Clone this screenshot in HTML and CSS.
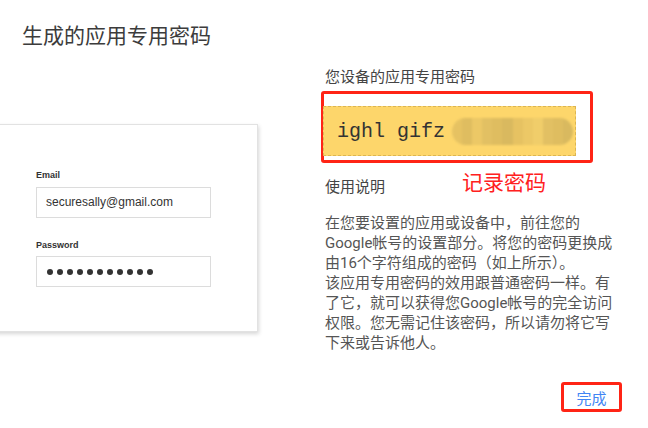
FILE: index.html
```html
<!DOCTYPE html>
<html lang="zh-CN">
<head>
    <meta charset="UTF-8">
    <meta name="viewport" content="width=device-width, initial-scale=1.0">
    <title>生成的应用专用密码</title>
    <link rel="stylesheet" href="styles.css">
</head>
<body>

    <div class="page">
        <h1 class="page-title">生成的应用专用密码</h1>

        <div class="page-body">
            <div class="preview">
                <div class="login-card">
                    <div class="field-label">Email</div>
                    <div class="field-input">securesally@gmail.com</div>
                    <div class="field-label field-label-second">Password</div>
                    <div class="field-input password-dots">
                        <span></span><span></span><span></span><span></span><span></span><span></span>
                        <span></span><span></span><span></span><span></span><span></span>
                    </div>
                </div>
            </div>

            <div class="details">
                <div class="section-label">您设备的应用专用密码</div>
                <div class="mark-box">
                    <div class="app-password">
                        <span class="pw-text">ighl gifz</span>
                        <span class="pw-mosaic">
                            <i class="m1"></i><i class="m2"></i><i class="m3"></i><i class="m4"></i><i class="m2"></i><i class="m5"></i><i class="m1"></i><i class="m3"></i><i class="m6"></i><i class="m4"></i><i class="m2"></i><i class="m5"></i>
                        </span>
                    </div>
                </div>

                <div class="usage-row">
                    <div class="section-label">使用说明</div>
                    <div class="mark-note">记录密码</div>
                </div>

                <div class="usage-text">
                    <p>在您要设置的应用或设备中，前往您的Google帐号的设置部分。将您的密码更换成由16个字符组成的密码（如上所示）。</p>
                    <p>该应用专用密码的效用跟普通密码一样。有了它，就可以获得您Google帐号的完全访问权限。您无需记住该密码，所以请勿将它写下来或告诉他人。</p>
                </div>

                <div class="actions">
                    <div class="mark-box mark-button">
                        <button class="done-btn">完成</button>
                    </div>
                </div>
            </div>
        </div>
    </div>

</body>
</html>
```

FILE: styles.css
```css
body {
    margin: 0;
    background-color: #fff;
    color: #444;
    font-family: Roboto, "Noto Sans CJK SC", sans-serif;
    overflow: hidden;
}
.page {
    width: 648px;
    height: 428px;
}
.page-title {
    margin: 0;
    padding: 22px 0 0 22px;
    font-size: 21px;
    line-height: 28px;
    font-weight: 400;
    color: #3c3c3c;
}
.page-body {
    display: flex;
    align-items: flex-start;
}

/* left: screenshot of the sign-in form */
.preview {
    width: 324px;
    flex-shrink: 0;
}
.login-card {
    width: 175px;
    margin: 74px 0 0 -12px;
    padding: 44px 46px 44px 47px;
    background-color: #fff;
    border: 1px solid #e2e2e2;
    box-shadow: 1px 2px 4px rgba(0, 0, 0, 0.16);
}
.field-label {
    font-family: "Liberation Sans", Arial, sans-serif;
    font-size: 9px;
    line-height: 12px;
    font-weight: bold;
    color: #333;
}
.field-label-second {
    margin-top: 21px;
}
.field-input {
    height: 29px;
    margin-top: 6px;
    padding: 0 0 0 9px;
    border: 1px solid #dcdcdc;
    font-family: "Liberation Sans", Arial, sans-serif;
    font-size: 12px;
    line-height: 29px;
    color: #333;
}
.password-dots {
    display: flex;
    align-items: center;
    gap: 4px;
    margin-top: 5px;
    padding-left: 10px;
}
.password-dots span {
    width: 6px;
    height: 6px;
    border-radius: 50%;
    background-color: #333;
}

/* right: generated password */
.details {
    width: 300px;
}
.section-label {
    font-size: 15px;
    line-height: 20px;
    color: #444;
    padding-left: 1px;
}
.details > .section-label {
    margin-top: 17px;
}
.mark-box {
    border: 3px solid #ff2415;
    border-radius: 3px;
}
.details > .mark-box {
    width: 266px;
    height: 54px;
    margin: 4px 0 0 -3px;
    padding-top: 12px;
}
.app-password {
    display: flex;
    align-items: center;
    box-sizing: border-box;
    width: 253px;
    height: 50px;
    margin-left: -1px;
    padding-left: 13px;
    background-color: #fdd66b;
    border: 1px dashed #dcb552;
}
.pw-text {
    font-family: "Liberation Mono", "Courier New", monospace;
    font-size: 20px;
    color: #333;
    white-space: pre;
}
.pw-mosaic {
    display: flex;
    width: 121px;
    height: 27px;
    margin-left: 7px;
    border-radius: 14px;
    overflow: hidden;
    filter: blur(0.8px);
    background-color: #f3d57a;
}
.pw-mosaic i {
    flex: 1;
}
.pw-mosaic .m1 { background-color: #e6c262; }
.pw-mosaic .m2 { background-color: #dfbd60; }
.pw-mosaic .m3 { background-color: #ecc866; }
.pw-mosaic .m4 { background-color: #e2c063; }
.pw-mosaic .m5 { background-color: #d9b95f; }
.pw-mosaic .m6 { background-color: #f0cd6a; }

.usage-row {
    display: flex;
    align-items: flex-start;
    margin-top: 14px;
}
.mark-note {
    margin: -6px 0 0 77px;
    font-size: 21px;
    line-height: 24px;
    color: #ff2020;
}
.usage-text {
    width: 296px;
    margin-top: 16px;
    padding-left: 1px;
    font-size: 15px;
    line-height: 20px;
    color: #555;
}
.usage-text p {
    margin: 0;
}
.actions {
    display: flex;
    justify-content: flex-end;
    margin-top: 29px;
}
.mark-button {
    width: 55px;
    height: 24px;
    margin-right: 2px;
}
.done-btn {
    display: block;
    width: 100%;
    height: 100%;
    padding: 0;
    border: none;
    background: none;
    font-family: Roboto, "Noto Sans CJK SC", sans-serif;
    font-size: 15px;
    color: #4285f4;
    cursor: pointer;
}
```
